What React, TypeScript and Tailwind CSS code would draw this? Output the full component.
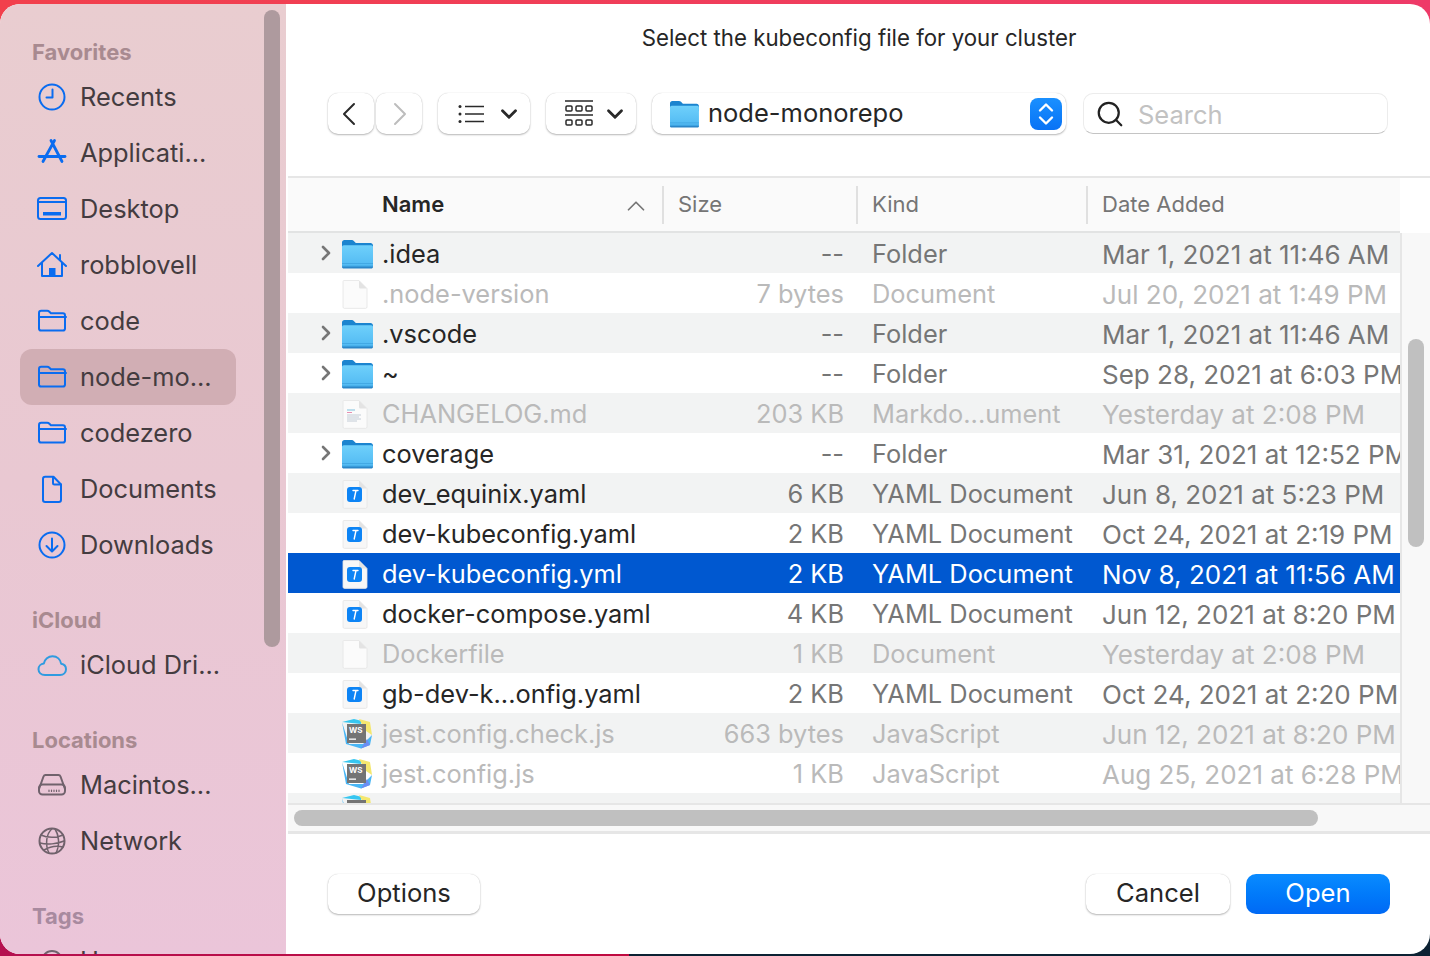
import { ChevronDown, ChevronRight, ChevronUp, Search } from "lucide-react";
import type { ReactNode } from "react";

type FileKind = "folder" | "blank" | "md" | "yaml" | "ws";

interface FileRow {
  name: string;
  size: string;
  kind: string;
  date: string;
  icon: FileKind;
  dim?: boolean;
  selected?: boolean;
}

const files: FileRow[] = [
  { name: ".idea", size: "--", kind: "Folder", date: "Mar 1, 2021 at 11:46 AM", icon: "folder" },
  { name: ".node-version", size: "7 bytes", kind: "Document", date: "Jul 20, 2021 at 1:49 PM", icon: "blank", dim: true },
  { name: ".vscode", size: "--", kind: "Folder", date: "Mar 1, 2021 at 11:46 AM", icon: "folder" },
  { name: "~", size: "--", kind: "Folder", date: "Sep 28, 2021 at 6:03 PM", icon: "folder" },
  { name: "CHANGELOG.md", size: "203 KB", kind: "Markdo...ument", date: "Yesterday at 2:08 PM", icon: "md", dim: true },
  { name: "coverage", size: "--", kind: "Folder", date: "Mar 31, 2021 at 12:52 PM", icon: "folder" },
  { name: "dev_equinix.yaml", size: "6 KB", kind: "YAML Document", date: "Jun 8, 2021 at 5:23 PM", icon: "yaml" },
  { name: "dev-kubeconfig.yaml", size: "2 KB", kind: "YAML Document", date: "Oct 24, 2021 at 2:19 PM", icon: "yaml" },
  { name: "dev-kubeconfig.yml", size: "2 KB", kind: "YAML Document", date: "Nov 8, 2021 at 11:56 AM", icon: "yaml", selected: true },
  { name: "docker-compose.yaml", size: "4 KB", kind: "YAML Document", date: "Jun 12, 2021 at 8:20 PM", icon: "yaml" },
  { name: "Dockerfile", size: "1 KB", kind: "Document", date: "Yesterday at 2:08 PM", icon: "blank", dim: true },
  { name: "gb-dev-k...onfig.yaml", size: "2 KB", kind: "YAML Document", date: "Oct 24, 2021 at 2:20 PM", icon: "yaml" },
  { name: "jest.config.check.js", size: "663 bytes", kind: "JavaScript", date: "Jun 12, 2021 at 8:20 PM", icon: "ws", dim: true },
  { name: "jest.config.js", size: "1 KB", kind: "JavaScript", date: "Aug 25, 2021 at 6:28 PM", icon: "ws", dim: true },
];

const BLUE = "#0a6cf0";

const SideSvg = ({ children, color = BLUE }: { children: ReactNode; color?: string }) => (
  <svg width="32" height="32" viewBox="0 0 32 32" fill="none" stroke={color} strokeWidth="2" strokeLinecap="round" strokeLinejoin="round">
    {children}
  </svg>
);

const FolderOutline = () => (
  <SideSvg>
    <path d="M3 9.500c0-1.400.8-2.200 2.200-2.200h6c1 0 1.500.3 2.200 1l1.500 1.500h12c1.400 0 2.100.8 2.100 2.100v13c0 1.300-.8 2.100-2.100 2.100H5.100c-1.300 0-2.100-.8-2.100-2.100z" transform="translate(0 -1.500)" />
    <path d="M3 12h27" />
  </SideSvg>
);

const sideIcons: Record<string, ReactNode> = {
  clock: (
    <SideSvg>
      <circle cx="16" cy="16" r="12.500" />
      <path d="M16.500 8.500v8h-6" />
    </SideSvg>
  ),
  apps: (
    <SideSvg>
      <path d="M15 3.500 26 24.500M18.500 3.500 7 24.500" strokeWidth="2.800" />
      <path d="M3 19.500h26" strokeWidth="2.800" />
    </SideSvg>
  ),
  desktop: (
    <SideSvg>
      <rect x="2" y="5" width="28" height="21" rx="2.500" />
      <path d="M2 9h28" />
      <rect x="7" y="19" width="18" height="3.500" fill={BLUE} stroke="none" />
    </SideSvg>
  ),
  home: (
    <SideSvg>
      <path d="M2 17 16 4l14 13" />
      <path d="M6 14v13h20V14M24 6v5" />
      <rect x="13" y="19" width="6.500" height="8" fill={BLUE} stroke="none" />
    </SideSvg>
  ),
  folder: <FolderOutline />,
  doc: (
    <SideSvg>
      <path d="M7 6c0-1.400.8-2.300 2.200-2.300h8.300L25 11.500v15.200c0 1.400-.8 2.300-2.200 2.300H9.200C7.800 29 7 28.100 7 26.700z" />
      <path d="M17 4v6c0 1 .5 1.500 1.500 1.500H25" />
    </SideSvg>
  ),
  download: (
    <SideSvg>
      <circle cx="16" cy="16" r="12.500" />
      <path d="M16 9.500v12.500M10.500 17l5.500 5.500 5.500-5.500" />
    </SideSvg>
  ),
  cloud: (
    <SideSvg color="#2f9be0">
      <path d="M9 26c-4 0-6.500-2.600-6.500-5.800 0-3 2.300-5.300 5.300-5.600C8.500 10 12.500 7.200 16.500 7.200c4.700 0 8 3.300 8.600 7.500 3 .4 4.900 2.700 4.900 5.500 0 3.300-2.500 5.800-6 5.800z" />
    </SideSvg>
  ),
  disk: (
    <SideSvg color="#70626c">
      <path d="M3 20 7.500 7.500c.4-1 1-1.500 2-1.500h13c1 0 1.600.5 2 1.500L29 20" />
      <rect x="3" y="15.500" width="26" height="10" rx="3.500" />
      <path d="M13 21v1.500M15.500 21v1.500M18 21v1.500M20.500 21v1.500M23 21v1.500" strokeWidth="1.200" />
    </SideSvg>
  ),
  globe: (
    <SideSvg color="#70626c">
      <circle cx="16" cy="16" r="12.500" />
      <path d="M16 3.800C10 9 9 20 13 28M19 4c4 6 5 16 1 24M5 10c6 3 16 3 22 0M4 18c7 2 17 1 24-2M8 25c5-3 11-5 19-3" strokeWidth="1.500" />
    </SideSvg>
  ),
};

const sidebar: { heading: string; items: { label: string; icon: string; active?: boolean }[] }[] = [
  {
    heading: "Favorites",
    items: [
      { label: "Recents", icon: "clock" },
      { label: "Applicati...", icon: "apps" },
      { label: "Desktop", icon: "desktop" },
      { label: "robblovell", icon: "home" },
      { label: "code", icon: "folder" },
      { label: "node-mo...", icon: "folder", active: true },
      { label: "codezero", icon: "folder" },
      { label: "Documents", icon: "doc" },
      { label: "Downloads", icon: "download" },
    ],
  },
  { heading: "iCloud", items: [{ label: "iCloud Dri...", icon: "cloud" }] },
  {
    heading: "Locations",
    items: [
      { label: "Macintos...", icon: "disk" },
      { label: "Network", icon: "globe" },
    ],
  },
];

const BlueFolder = ({ w = 32, h = 30 }: { w?: number; h?: number }) => (
  <svg width={w} height={h} viewBox="0 0 32 30">
    <defs>
      <linearGradient id="fld" x1="0" y1="0" x2="0" y2="1">
        <stop offset="0" stopColor="#6fd0fb" />
        <stop offset="1" stopColor="#4fb8f2" />
      </linearGradient>
    </defs>
    <path d="M1 3.500C1 2 2 1 3.500 1h7c1 0 1.600.3 2.300 1l2 2h14.700C30.900 4 32 5 32 6.500V12H1z" fill="#1b84cf" />
    <path d="M1 8c0-1 .8-1.800 1.800-1.800h27.400c1 0 1.800.8 1.800 1.800v19c0 1.200-.8 2-2 2H3c-1.200 0-2-.8-2-2z" fill="url(#fld)" />
    <path d="M1 24.500h31M1 27h31" stroke="#3da3e0" strokeWidth="0.800" />
    <path d="M1 27.500h31V28c0 .800-.8 1.500-1.800 1.500H2.800c-1 0-1.800-.7-1.800-1.500z" fill="#2b86c8" />
  </svg>
);

const DocBase = ({ children, faint }: { children?: ReactNode; faint?: boolean }) => (
  <svg width="28" height="30" viewBox="0 0 28 30">
    <path d="M3 1.500h15L26 9.500V28c0 .8-.6 1.400-1.400 1.400H3.400C2.600 29.400 2 28.800 2 28V2.500c0-.6.4-1 1-1z" fill={faint ? "#fbfbfb" : "#f7f7f7"} stroke="#e4e4e4" strokeWidth="0.800" />
    <path d="M18 1.500V8c0 1 .5 1.500 1.500 1.500H26z" fill="#e3e3e3" />
    {children}
  </svg>
);

const FileIcon = ({ icon }: { icon: FileKind }) => {
  if (icon === "folder") return <BlueFolder />;
  if (icon === "blank") return <DocBase faint />;
  if (icon === "md")
    return (
      <DocBase faint>
        <path d="M6 11h8" stroke="#7fc0dd" strokeWidth="1" />
        <path d="M6 13.500h5" stroke="#e88fb0" strokeWidth="1" />
        <path d="M6 16h14M6 18h12M6 20h14M6 22h10" stroke="#c3ccd6" strokeWidth="1" />
      </DocBase>
    );
  if (icon === "yaml")
    return (
      <DocBase>
        <rect x="6" y="8" width="15" height="15" rx="3" fill="#0d84f5" />
        <path d="M12 11.500h5M15 11.500l-1.800 8.500" stroke="#fff" strokeWidth="1.400" strokeLinecap="round" />
      </DocBase>
    );
  return (
    <svg width="32" height="30" viewBox="0 0 32 30">
      <path d="M1 3 13 0l8 2-1 3z" fill="#37c6f0" />
      <path d="M18 0l11 3 2 13-6-4z" fill="#f4e76e" />
      <path d="M1 3 5 25l15 4.500 9-3.500 2-10-9 9H8z" fill="#49b6f5" />
      <path d="M26 20l3 6-9 3.500z" fill="#6c8df2" />
      <rect x="6" y="5" width="19" height="19" fill="#747474" />
      <text x="8" y="13.500" fontSize="8" fontWeight="700" fill="#fff" fontFamily="Inter, sans-serif">WS</text>
      <rect x="8" y="19.500" width="7" height="1.300" fill="#fff" />
    </svg>
  );
};

const SideNav = () => (
  <aside className="relative w-[286px] shrink-0 overflow-hidden bg-gradient-to-b from-[#e9cdd0] via-[#e9c8d2] to-[#ebc5d9] pl-[20px] pt-[31px]">
    {sidebar.map((section) => (
      <div key={section.heading} className="mb-[30px] w-[216px]">
        <div className="pl-[12px] text-[22px] font-bold leading-[34px] text-[#a88a90]">{section.heading}</div>
        {section.items.map((item) => (
          <div
            key={item.label}
            className={`flex h-[56px] items-center gap-[9px] rounded-[12px] pl-[13px] text-[25.4px] text-[#443c40] ${item.active ? "bg-[#d1aeb4]" : ""}`}
          >
            <span className="flex w-[38px] shrink-0 justify-center">{sideIcons[item.icon]}</span>
            <span className="whitespace-nowrap">{item.label}</span>
          </div>
        ))}
      </div>
    ))}
    <div className="w-[216px]">
      <div className="pl-[12px] text-[22px] font-bold leading-[34px] text-[#a88a9f]">Tags</div>
      <div className="flex h-[56px] items-center gap-[9px] pl-[13px] text-[25.4px] text-[#443c40]">
        <span className="flex w-[38px] justify-center">
          <span className="block h-[22px] w-[22px] rounded-full border-2 border-[#70626c]" />
        </span>
        <span>Home</span>
      </div>
    </div>
    <div className="absolute left-[264px] top-[6px] h-[637px] w-[16px] rounded-full bg-[#ae9a9e]" />
  </aside>
);

const ToolButton = ({ className = "", children }: { className?: string; children: ReactNode }) => (
  <div className={`flex h-[41px] items-center rounded-[10px] bg-white shadow-[0_1px_2px_rgba(0,0,0,0.28),0_0_1px_rgba(0,0,0,0.18)] ${className}`}>
    {children}
  </div>
);

const NavChevron = ({ d, color }: { d: string; color: string }) => (
  <svg width="14" height="24" viewBox="0 0 14 24" fill="none" stroke={color} strokeWidth="2" strokeLinecap="round" strokeLinejoin="round">
    <path d={d} />
  </svg>
);

const Toolbar = () => (
  <div className="flex h-[41px] items-center pl-[40px]">
    <ToolButton className="w-[46px] justify-center pr-[4px]">
      <NavChevron d="M12 2 2 12l10 10" color="#2a2a2a" />
    </ToolButton>
    <ToolButton className="ml-[2px] w-[46px] justify-center pl-[2px]">
      <NavChevron d="M2 2l10 10-10 10" color="#bdbdbd" />
    </ToolButton>
    <ToolButton className="ml-[16px] w-[92px] pl-[20px]">
      <svg width="28" height="18" viewBox="0 0 28 18" stroke="#2a2a2a" fill="#2a2a2a">
        <path d="M7 1.500h19M7 9h19M7 16.500h19" strokeWidth="1.500" />
        <circle cx="2" cy="1.500" r="1.500" stroke="none" />
        <circle cx="2" cy="9" r="1.500" stroke="none" />
        <circle cx="2" cy="16.500" r="1.500" stroke="none" />
      </svg>
      <ChevronDown size={26} strokeWidth={2.600} className="ml-[10px] text-[#2a2a2a]" />
    </ToolButton>
    <ToolButton className="ml-[16px] w-[90px] pl-[19px]">
      <svg width="28" height="28" viewBox="0 0 28 28" fill="none" stroke="#2a2a2a">
        <path d="M0 1h28M0 15h28" strokeWidth="1.500" />
        <rect x="1" y="6" width="6" height="5" rx="1" strokeWidth="1.500" />
        <rect x="11" y="6" width="6" height="5" rx="1" strokeWidth="1.500" />
        <rect x="21" y="6" width="6" height="5" rx="1" strokeWidth="1.500" />
        <rect x="1" y="20" width="6" height="5" rx="1" strokeWidth="1.500" />
        <rect x="11" y="20" width="6" height="5" rx="1" strokeWidth="1.500" />
        <rect x="21" y="20" width="6" height="5" rx="1" strokeWidth="1.500" />
      </svg>
      <ChevronDown size={26} strokeWidth={2.600} className="ml-[9px] text-[#2a2a2a]" />
    </ToolButton>
    <ToolButton className="ml-[16px] w-[414px] pl-[17px] pr-[4px]">
      <BlueFolder w={30} h={28} />
      <span className="ml-[9px] flex-1 text-[25.5px] text-[#262626]">node-monorepo</span>
      <div className="flex h-[32px] w-[32px] items-center justify-center rounded-[8px] bg-gradient-to-b from-[#1a90ff] to-[#0a72f5]">
        <svg width="20" height="26" viewBox="0 0 20 26" fill="none" stroke="#fff" strokeWidth="2.400" strokeLinecap="round" strokeLinejoin="round">
          <path d="M4 9.500l6-6 6 6M4 16.500l6 6 6-6" />
        </svg>
      </div>
    </ToolButton>
    <div className="ml-[17px] flex h-[41px] w-[305px] items-center gap-[13px] rounded-[10px] border border-[#ececec] border-b-[#c4c4c4] bg-white pl-[11px]">
      <Search size={30} strokeWidth={1.800} className="text-[#222]" />
      <span className="pt-[3px] text-[25.5px] text-[#c2c2c2]">Search</span>
    </div>
  </div>
);

const ColumnHeader = () => (
  <div className="flex h-[55px] w-[1112px] items-center border-b-2 border-[#e2e3e3] bg-[#fafafa] text-[22px] text-[#757575]">
    <div className="flex h-[38px] w-[376px] shrink-0 items-center justify-between border-r-2 border-[#e0e0e0] pl-[94px] pr-[11px]">
      <span className="font-semibold text-[#262626]">Name</span>
      <ChevronUp size={30} strokeWidth={1.400} className="mt-[2px] text-[#757575]" />
    </div>
    <div className="flex h-[38px] w-[194px] shrink-0 items-center border-r-2 border-[#e0e0e0] pl-[14px]">Size</div>
    <div className="flex h-[38px] w-[230px] shrink-0 items-center border-r-2 border-[#e0e0e0] pl-[14px]">Kind</div>
    <div className="pl-[14px]">Date Added</div>
  </div>
);

const Row = ({ file, index }: { file: FileRow; index: number }) => {
  const bg = file.selected ? "bg-[#0058d0]" : index % 2 === 0 ? "bg-[#f2f3f3]" : "bg-white";
  const nameColor = file.selected ? "text-white" : file.dim ? "text-[#bababa]" : "text-[#262626]";
  const metaColor = file.selected ? "text-white" : file.dim ? "text-[#bababa]" : "text-[#767676]";
  return (
    <div className={`flex h-[40px] items-center overflow-hidden whitespace-nowrap pt-[2px] text-[25.4px] ${bg}`}>
      <div className="flex w-[53px] shrink-0 justify-end pr-[3px]">
        {file.icon === "folder" && <ChevronRight size={24} strokeWidth={2.600} className="-mt-[3px] text-[#767676]" />}
      </div>
      <div className="flex w-[41px] shrink-0">
        <FileIcon icon={file.icon} />
      </div>
      <div className={`w-[300px] shrink-0 ${nameColor}`}>{file.name}</div>
      <div className={`w-[162px] shrink-0 text-right ${metaColor}`}>{file.size}</div>
      <div className={`w-[231px] shrink-0 pl-[28px] ${metaColor}`}>{file.kind}</div>
      <div className={`pl-[27px] text-[26px] ${metaColor}`}>{file.date}</div>
    </div>
  );
};

const FileList = () => (
  <div className="flex flex-col">
    <div className="border-t-2 border-[#e6e6e6]">
      <ColumnHeader />
    </div>
    <div className="flex">
      <div className="h-[570px] w-[1114px] overflow-hidden border-r-2 border-[#e6e6e6]">
        {files.map((file, i) => (
          <Row key={file.name} file={file} index={i} />
        ))}
        <div className="h-[10px] overflow-hidden bg-[#f2f3f3] pl-[53px] pt-[2px]">
          <FileIcon icon="ws" />
        </div>
      </div>
      <div className="flex-1 bg-[#f8f8f8] pl-[6px] pt-[106px]">
        <div className="h-[208px] w-[16px] rounded-full bg-[#c0c0c0]" />
      </div>
    </div>
    <div className="h-[28px] border-t-2 border-[#e6e6e6] bg-[#f8f8f8] pl-[6px] pt-[5px]">
      <div className="h-[16px] w-[1024px] rounded-full bg-[#c0c0c0]" />
    </div>
  </div>
);

const Footer = () => (
  <div className="flex flex-1 items-center justify-between border-t-[3px] border-[#e6e6e6] pl-[40px] pr-[40px] text-[25.6px] text-[#262626]">
    <div className="flex h-[40px] w-[152px] items-center justify-center rounded-[10px] bg-white pb-[1px] shadow-[0_1px_2px_rgba(0,0,0,0.28),0_0_1px_rgba(0,0,0,0.18)]">
      Options
    </div>
    <div className="flex gap-[16px]">
      <div className="flex h-[40px] w-[144px] items-center justify-center rounded-[10px] bg-white pb-[1px] shadow-[0_1px_2px_rgba(0,0,0,0.28),0_0_1px_rgba(0,0,0,0.18)]">
        Cancel
      </div>
      <div className="flex h-[40px] w-[144px] items-center justify-center rounded-[10px] bg-gradient-to-b from-[#0a8bff] to-[#0069f5] pb-[1px] text-white">
        Open
      </div>
    </div>
  </div>
);

export default function App() {
  return (
    <div
      className="relative h-[956px] w-[1430px] overflow-hidden pt-[4px]"
      style={{ fontFamily: "Inter, 'Liberation Sans', sans-serif" }}
    >
      {/* desktop wallpaper peeking out round the sheet */}
      <div className="absolute left-0 top-0 h-[30px] w-[1430px] bg-gradient-to-r from-[#f2404c] to-[#ee3a68]" />
      <div className="absolute bottom-0 left-0 h-[30px] w-[1430px] bg-[linear-gradient(90deg,#b5104f_0%,#bf0a40_44%,#0c2233_44%,#0c2233_100%)]" />
      <div className="relative flex h-[950px] overflow-hidden rounded-[20px] bg-white">
        <SideNav />
        <main className="flex w-[1144px] flex-col pl-[2px]">
          <div className="pt-[19px] text-center text-[22.25px] leading-[30px] text-[#262626]">
            Select the kubeconfig file for your cluster
          </div>
          <div className="mt-[40px]">
            <Toolbar />
          </div>
          <div className="mt-[42px]">
            <FileList />
          </div>
          <Footer />
        </main>
      </div>
    </div>
  );
}
